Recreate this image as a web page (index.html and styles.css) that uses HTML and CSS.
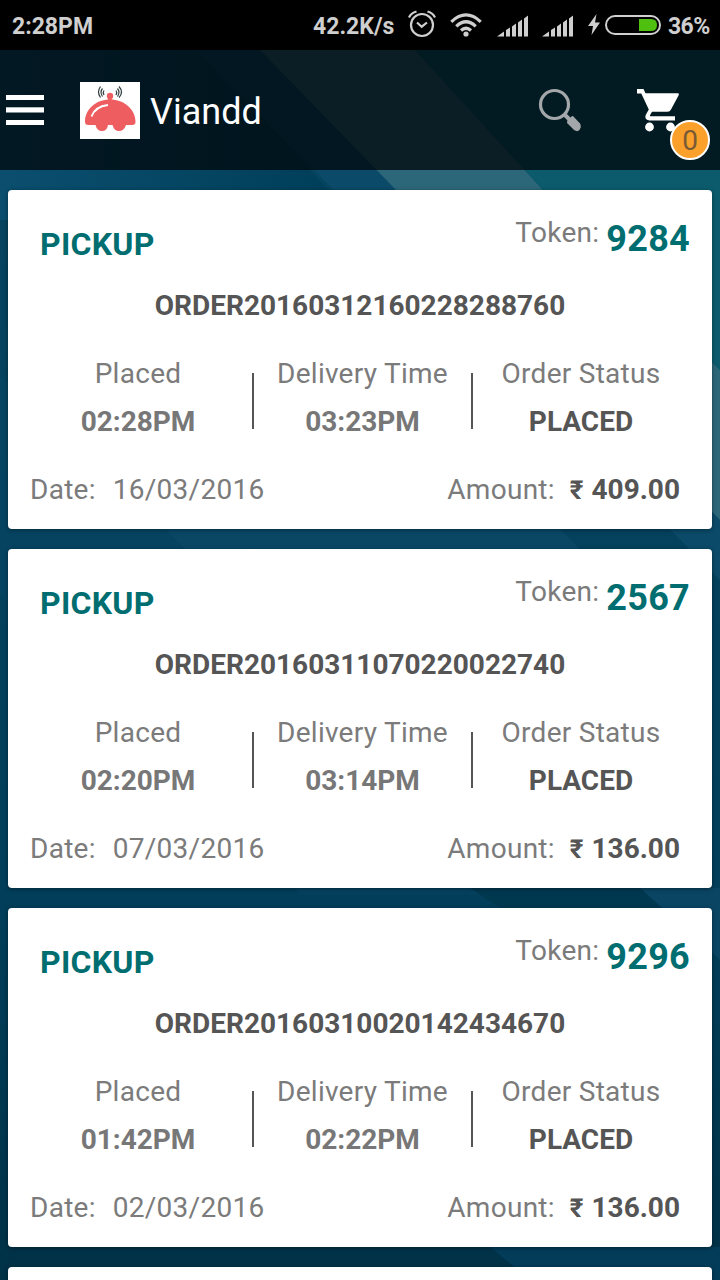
FILE: index.html
```html
<!DOCTYPE html>
<html lang="en">
<head>
<meta charset="utf-8">
<title>Viandd</title>
<link rel="stylesheet" href="styles.css">
</head>
<body>
<div class="app">
  <svg class="backdrop" viewBox="0 0 720 1280" aria-hidden="true">
    <defs>
      <linearGradient id="base" x1="0" y1="0" x2="0" y2="1">
        <stop offset="0.13" stop-color="#07445f"/>
        <stop offset="0.45" stop-color="#04415d"/>
        <stop offset="0.72" stop-color="#023e59"/>
        <stop offset="1" stop-color="#003147"/>
      </linearGradient>
      <linearGradient id="glow" x1="0" y1="0" x2="1" y2="0">
        <stop offset="0" stop-color="#0b4e6e"/>
        <stop offset="1" stop-color="#003f5a"/>
      </linearGradient>
    </defs>
    <rect width="720" height="1280" fill="url(#base)"/>
    <path d="M0 50H195L329 190V220H0Z" fill="url(#glow)"/>
    <path d="M0 375L185 549L530 894H300L0 594Z" fill="#084765" opacity=".45"/>
    <path d="M165 529H560L580 549H185Z" fill="#0b4968" opacity=".8"/>
    <path d="M195 50H260L720 520V580Z" fill="#0b4a68"/>
    <path d="M260 50H415L543 190L720 370V520L396 190Z" fill="#2c6679"/>
    <path d="M415 50H720V370L543 190Z" fill="#0b5b6c"/>
    <path d="M470 888H640L665 908H500Z" fill="#003850"/>
    <path d="M640 888H720V960Z" fill="#0a4564"/>
    <path d="M490 1247H720V1280H530Z" fill="#033c59"/>
  </svg>

  <div class="statusbar">
    <span class="clock">2:28PM</span>
    <span class="speed">42.2K/s</span>
    <svg class="alarm" width="28" height="28" viewBox="0 0 28 28" fill="none" stroke="#cfcfcf">
      <circle cx="14" cy="15" r="11" stroke-width="2.2"/>
      <path d="M9 12.5l4.700 4.200 5.300-4.200" stroke-width="2.200"/>
      <path d="M1 7.500Q3 3 8.500 1.500M27 7.500Q25 3 19.500 1.500" stroke-width="2.200"/>
    </svg>
    <svg class="wifi" width="32" height="24" viewBox="0 0 32 24" fill="none" stroke="#cfcfcf" stroke-width="3.200">
      <path d="M1.300 8.800Q16-5 30.700 8.800M6.300 13.300Q16 4.200 25.700 13.300M11 17.500Q16 13 21 17.500"/>
      <circle cx="16" cy="21" r="2.600" fill="#cfcfcf" stroke="none"/>
    </svg>
    <svg class="signal" width="32" height="22" viewBox="0 0 32 22" fill="#cfcfcf">
      <path d="M0 21.500L7 16.500V21.500ZM9 15l4-2.500v9H9ZM15 11.500l4-3v13h-4ZM21 7.500l4-3v17h-4ZM27 3.500l4-3v21h-4Z"/>
    </svg>
    <svg class="signal signal-second" width="32" height="22" viewBox="0 0 32 22" fill="#cfcfcf">
      <path d="M0 21.500L7 16.500V21.500ZM9 15l4-2.500v9H9ZM15 11.500l4-3v13h-4ZM21 7.500l4-3v17h-4ZM27 3.500l4-3v21h-4Z"/>
    </svg>
    <svg class="bolt" width="12" height="22" viewBox="0 0 12 22" fill="#cfcfcf">
      <path d="M8.500 0L0 12H5L3.500 21L12 8.500H7Z"/>
    </svg>
    <svg class="battery" width="56" height="20" viewBox="0 0 56 20">
      <rect x="1" y="1" width="54" height="18" rx="9" fill="none" stroke="#cfcfcf" stroke-width="2"/>
      <path d="M34 4h12q6 0 6 6t-6 6H34Z" fill="#4fc010"/>
    </svg>
    <span class="percent">36%</span>
  </div>

  <header class="appbar">
    <svg class="menu" width="38" height="30" viewBox="0 0 38 30" fill="#fff">
      <rect width="38" height="5"/><rect y="12.300" width="38" height="5.200"/><rect y="25" width="38" height="5"/>
    </svg>
    <svg class="logo" width="60" height="57" viewBox="0 0 60 57">
      <rect width="60" height="57" fill="#fff"/>
      <g fill="#ee5d5f">
        <circle cx="30" cy="14" r="3.200"/>
        <rect x="28.300" y="14" width="3.400" height="6"/>
        <path d="M5 40C5 27 16 17.500 30 17.500S55.500 27 55.500 40Q55.500 43 52 43H46Q44 49 39 49T32.500 43H28Q27 49 22 49T15.500 43H8.500Q5 43 5 40Z"/>
      </g>
      <path d="M11.500 34.500Q15 24.500 28 23" fill="none" stroke="#fff" stroke-width="2"/>
      <g fill="none" stroke="#303c3c" stroke-width="1.200">
        <path d="M20.500 4.500Q16.500 10 20.500 15.500M22.500 6.500Q19.500 10 22.500 14.500M24 8.500Q22.500 10.500 24 13M39 4.500Q44 10 39 15.500M37.500 6.500Q40.500 10 37.500 14.500M36 8.500Q37.500 10.500 36 13"/>
      </g>
    </svg>
    <h1 class="title">Viandd</h1>
    <svg class="search" width="46" height="46" viewBox="0 0 46 46" fill="none" stroke="#a3a7aa">
      <circle cx="16.500" cy="16.500" r="14" stroke-width="3.200"/>
      <path d="M26.500 26.500l5 5" stroke-width="4"/>
      <path d="M30.500 32.500L34.500 29L41.500 36.500Q42.500 39 41 41T37 41.500L30 34.500Z" fill="#a3a7aa" stroke-width="2" stroke-linejoin="round"/>
    </svg>
    <div class="cart">
      <svg width="42" height="43" viewBox="0 0 42 43" fill="#fff">
        <path d="M0 0H6.500L8.500 4.300H41Q42.500 4.700 41.500 6.500L34 20.500Q33 22.700 30.500 22.700H15L13 26.300Q12.700 27.300 14 27.300H38V31.500H12.500C8.500 31.500 7.500 28 9 25.500L11.800 20.500L4.300 4.500H0Z"/>
        <circle cx="12.500" cy="38" r="4.400"/><circle cx="33.500" cy="38" r="4.400"/>
      </svg>
      <span class="badge">0</span>
    </div>
  </header>

  <main class="orders">
    <article class="card">
      <div class="card-head"><span class="type">PICKUP</span><span class="token-label">Token:</span><span class="token">9284</span></div>
      <div class="order-id">ORDER20160312160228288760</div>
      <div class="details">
        <div class="detail"><span>Placed</span><b>02:28PM</b></div>
        <i class="divider"></i>
        <div class="detail"><span>Delivery Time</span><b>03:23PM</b></div>
        <i class="divider"></i>
        <div class="detail"><span>Order Status</span><b class="status">PLACED</b></div>
      </div>
      <div class="card-foot"><span class="date-label">Date:</span><span>16/03/2016</span><span class="amount-label">Amount:</span><b class="amount"><span class="rupee">₹</span>409.00</b></div>
    </article>
    <article class="card">
      <div class="card-head"><span class="type">PICKUP</span><span class="token-label">Token:</span><span class="token">2567</span></div>
      <div class="order-id">ORDER20160311070220022740</div>
      <div class="details">
        <div class="detail"><span>Placed</span><b>02:20PM</b></div>
        <i class="divider"></i>
        <div class="detail"><span>Delivery Time</span><b>03:14PM</b></div>
        <i class="divider"></i>
        <div class="detail"><span>Order Status</span><b class="status">PLACED</b></div>
      </div>
      <div class="card-foot"><span class="date-label">Date:</span><span>07/03/2016</span><span class="amount-label">Amount:</span><b class="amount"><span class="rupee">₹</span>136.00</b></div>
    </article>
    <article class="card">
      <div class="card-head"><span class="type">PICKUP</span><span class="token-label">Token:</span><span class="token">9296</span></div>
      <div class="order-id">ORDER20160310020142434670</div>
      <div class="details">
        <div class="detail"><span>Placed</span><b>01:42PM</b></div>
        <i class="divider"></i>
        <div class="detail"><span>Delivery Time</span><b>02:22PM</b></div>
        <i class="divider"></i>
        <div class="detail"><span>Order Status</span><b class="status">PLACED</b></div>
      </div>
      <div class="card-foot"><span class="date-label">Date:</span><span>02/03/2016</span><span class="amount-label">Amount:</span><b class="amount"><span class="rupee">₹</span>136.00</b></div>
    </article>
    <article class="card"></article>
  </main>
</div>
</body>
</html>
```

FILE: styles.css
```css
* { box-sizing: border-box; }
body { margin: 0; font-family: Roboto, "Noto Sans", sans-serif; }
svg { display: block; flex: none; }
.app { position: relative; isolation: isolate; width: 720px; height: 1280px; overflow: hidden; }
.backdrop { position: absolute; inset: 0; z-index: -1; width: 720px; height: 1280px; }

.statusbar {
  display: flex; align-items: center; height: 50px; padding: 0 12px;
  background: #000; color: #cfcfcf; font-size: 23px; font-weight: 700; white-space: nowrap;
}
.statusbar span { flex: none; }
.clock { width: 301px; padding-top: 2px; }
.speed { width: 95px; padding-top: 2px; }
.alarm { margin-top: -2px; }
.wifi { margin-left: 14px; }
.signal { margin: 1px 0 0 15px; }
.signal-second { margin-left: 13px; }
.bolt { margin-left: 14px; }
.battery { margin-left: 5px; }
.percent { margin-left: 7px; padding-top: 2px; letter-spacing: -.6px; }

.appbar {
  display: flex; align-items: flex-start; height: 120px; padding-left: 6px;
  background: rgba(0, 6, 8, .74); color: #fff;
}
.menu { margin-top: 45px; }
.logo { margin: 32px 0 0 36px; }
.title { width: 388px; margin: 41px 0 0 10px; font-size: 36px; font-weight: 400; line-height: 42px; }
.search { margin-top: 38px; }
.cart { position: relative; margin: 39px 0 0 53px; }
.badge {
  position: absolute; left: 33px; top: 31px; width: 40px; height: 40px;
  border: 2px solid #fff; border-radius: 50%; background: #fba12b;
  color: #7a5a35; font-size: 28px; line-height: 38px; text-align: center;
}

.orders { display: flex; flex-direction: column; gap: 20px; padding: 20px 8px 0; }
.card {
  flex: none; height: 339px; padding-top: 26px; border-radius: 4px; background: #fff;
  box-shadow: 0 1px 4px rgba(0, 0, 0, .4); color: #7b7b7b; font-size: 28px; line-height: 33px; letter-spacing: .27px; white-space: nowrap;
}
.card-head { display: flex; align-items: flex-start; height: 73px; padding: 0 22px 0 32px; }
.type { margin: 9px auto 0 0; color: #006e70; font-size: 32px; font-weight: 700; line-height: 38px; }
.token { margin: 2px 0 0 7px; color: #006e70; font-size: 36px; font-weight: 700; line-height: 42px; }
.order-id { color: #555; font-weight: 700; letter-spacing: 0; text-align: center; }
.details { display: grid; grid-template-columns: 228px 2px 217px 2px 216px; margin-top: 35px; padding-left: 16px; }
.detail { display: flex; flex-direction: column; align-items: center; gap: 15px; }
.detail b { color: #777; font-weight: 700; letter-spacing: 0; }
.detail .status { color: #555; }
.divider { height: 56px; margin-top: 16px; background: #555; }
.card-foot { display: flex; margin-top: 35px; padding: 0 32px 0 22px; }
.date-label { margin-right: 17px; }
.amount-label { margin-left: auto; }
.amount { display: flex; margin-left: 15px; color: #555; font-weight: 700; letter-spacing: 0; }
.rupee { margin-right: 8px; font-size: 26px; line-height: 34px; }
```
